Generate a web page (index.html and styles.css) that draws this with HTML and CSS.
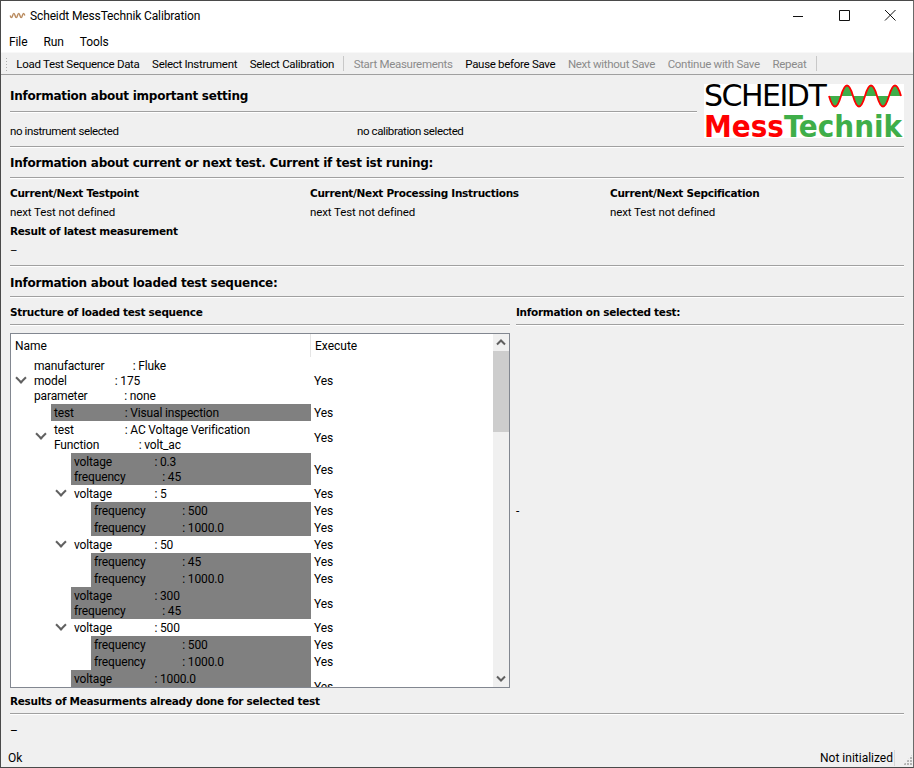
FILE: index.html
```html
<!DOCTYPE html>
<html>
<head>
    <meta charset="UTF-8">
    <title>Scheidt MessTechnik Calibration</title>
    <link rel="stylesheet" href="styles.css">
</head>
<body>
<div id="window">
    <div id="titleBar">
        <svg class="appIcon" viewBox="0 0 74 24"><path d="M1 12c4 14 8 14 12 0c4 -14 8 -14 12 0c4 14 8 14 12 0c4 -14 8 -14 12 0c4 14 8 14 12 0c4 -14 8 -14 12 0"/></svg>
        <span class="appTitle">Scheidt MessTechnik Calibration</span>
        <div class="winButtons">
            <svg viewBox="0 0 46 29"><path d="M18 15.500h10"/></svg>
            <svg viewBox="0 0 46 29"><path d="M18.500 9.500h10v10h-10z"/></svg>
            <svg viewBox="0 0 46 29"><path d="M18 9l10.500 10.500M28.500 9l-10.500 10.500"/></svg>
        </div>
    </div>
    <div id="menuBar">
        <span>File</span>
        <span>Run</span>
        <span>Tools</span>
    </div>
    <div id="toolBar">
        <div class="handle"></div>
        <span class="tool">Load Test Sequence Data</span>
        <span class="tool">Select Instrument</span>
        <span class="tool">Select Calibration</span>
        <div class="toolSep"></div>
        <span class="tool off">Start Measurements</span>
        <span class="tool">Pause before Save</span>
        <span class="tool off">Next without Save</span>
        <span class="tool off">Continue with Save</span>
        <span class="tool off">Repeat</span>
        <div class="toolSep"></div>
    </div>

    <div id="main">
        <div class="topRow">
            <div class="topLeft">
                <h2 class="first">Information about important setting</h2>
                <div class="line"></div>
                <div class="selected">
                    <span class="selInstrument">no instrument selected</span>
                    <span>no calibration selected</span>
                </div>
            </div>
            <div class="logo">
                <div class="logoTop">
                    <span>SCHEIDT</span>
                    <svg viewBox="0 0 74 24"><path d="M1 12c4 14 8 14 12 0c4 -14 8 -14 12 0c4 14 8 14 12 0c4 -14 8 -14 12 0c4 14 8 14 12 0c4 -14 8 -14 12 0"/></svg>
                </div>
                <div class="logoBottom"><span class="red">Mess</span><span class="green">Technik</span></div>
            </div>
        </div>
        <div class="line"></div>

        <h2>Information about current or next test. Current if test ist runing:</h2>
        <div class="line"></div>
        <div class="current">
            <div class="curCols">
                <div>
                    <h3>Current/Next Testpoint</h3>
                    <div class="val">next Test not defined</div>
                </div>
                <div>
                    <h3>Current/Next Processing Instructions</h3>
                    <div class="val">next Test not defined</div>
                </div>
                <div>
                    <h3>Current/Next Sepcification</h3>
                    <div class="val">next Test not defined</div>
                </div>
            </div>
            <h3>Result of latest measurement</h3>
            <div class="val">–</div>
        </div>
        <div class="line"></div>

        <h2 class="loaded">Information about loaded test sequence:</h2>
        <div class="line"></div>

        <div class="panels">
            <div class="panelLeft">
                <h3 class="panelHead">Structure of loaded test sequence</h3>
                <div class="line"></div>
                <div id="tree">
                    <div class="treeMain">
                        <div class="treeHead">
                            <div class="headName">Name</div>
                            <div class="headExec">Execute</div>
                        </div>
                        <div class="treeBody">
                            <div class="row d0">
                                <div class="arrow open"></div>
                                <div class="cell">manufacturer          : Fluke
model                 : 175
parameter             : none</div>
                                <div class="exec">Yes</div>
                            </div>
                            <div class="row d1">
                                <div class="arrow"></div>
                                <div class="cell grey">test                  : Visual inspection</div>
                                <div class="exec">Yes</div>
                            </div>
                            <div class="row d1">
                                <div class="arrow open"></div>
                                <div class="cell">test                  : AC Voltage Verification
Function              : volt_ac</div>
                                <div class="exec">Yes</div>
                            </div>
                            <div class="row d2">
                                <div class="arrow"></div>
                                <div class="cell grey">voltage               : 0.3
frequency             : 45</div>
                                <div class="exec">Yes</div>
                            </div>
                            <div class="row d2">
                                <div class="arrow open"></div>
                                <div class="cell">voltage               : 5</div>
                                <div class="exec">Yes</div>
                            </div>
                            <div class="row d3">
                                <div class="arrow"></div>
                                <div class="cell grey">frequency             : 500</div>
                                <div class="exec">Yes</div>
                            </div>
                            <div class="row d3">
                                <div class="arrow"></div>
                                <div class="cell grey">frequency             : 1000.0</div>
                                <div class="exec">Yes</div>
                            </div>
                            <div class="row d2">
                                <div class="arrow open"></div>
                                <div class="cell">voltage               : 50</div>
                                <div class="exec">Yes</div>
                            </div>
                            <div class="row d3">
                                <div class="arrow"></div>
                                <div class="cell grey">frequency             : 45</div>
                                <div class="exec">Yes</div>
                            </div>
                            <div class="row d3">
                                <div class="arrow"></div>
                                <div class="cell grey">frequency             : 1000.0</div>
                                <div class="exec">Yes</div>
                            </div>
                            <div class="row d2">
                                <div class="arrow"></div>
                                <div class="cell grey">voltage               : 300
frequency             : 45</div>
                                <div class="exec">Yes</div>
                            </div>
                            <div class="row d2">
                                <div class="arrow open"></div>
                                <div class="cell">voltage               : 500</div>
                                <div class="exec">Yes</div>
                            </div>
                            <div class="row d3">
                                <div class="arrow"></div>
                                <div class="cell grey">frequency             : 500</div>
                                <div class="exec">Yes</div>
                            </div>
                            <div class="row d3">
                                <div class="arrow"></div>
                                <div class="cell grey">frequency             : 1000.0</div>
                                <div class="exec">Yes</div>
                            </div>
                            <div class="row d2 cut">
                                <div class="arrow"></div>
                                <div class="cell grey">voltage               : 1000.0</div>
                                <div class="exec">Yes</div>
                            </div>
                        </div>
                    </div>
                    <div class="scrollBar">
                        <svg viewBox="0 0 16 17"><path d="M4 10.500l4 -4l4 4"/></svg>
                        <div class="thumbTrack"><div class="thumb"></div></div>
                        <svg viewBox="0 0 16 17"><path d="M4 6.500l4 4l4 -4"/></svg>
                    </div>
                </div>
            </div>
            <div class="panelRight">
                <h3 class="panelHead">Information on selected test:</h3>
                <div class="line"></div>
                <div class="infoBox">-</div>
            </div>
        </div>

        <h3 class="resultHead">Results of Measurments already done for selected test</h3>
        <div class="line"></div>
        <div class="resultVal">–</div>
    </div>

    <div id="statusBar">
        <span class="statusLeft">Ok</span>
        <span class="statusRight">Not initialized</span>
        <div class="grip"></div>
    </div>
</div>
</body>
</html>
```

FILE: styles.css
```css
* {
    margin: 0;
    padding: 0;
    box-sizing: border-box;
}

html, body {
    height: 100%;
    overflow: hidden;
}

body {
    font-family: "Roboto", sans-serif;
    font-size: 12px;
    color: #000;
    background-color: #f0f0f0;
}

#window {
    height: 768px;
    display: flex;
    flex-direction: column;
    border: 1px solid #4a4a4a;
    border-right-color: #6a6a6a;
}

/*标题栏*/
#titleBar {
    height: 29px;
    flex: none;
    display: flex;
    align-items: center;
    background-color: #fff;
    padding-left: 9px;
}

.appIcon {
    width: 15px;
    height: 5px;
    margin-right: 5px;
    overflow: visible;
}

.appIcon path {
    fill: none;
    stroke: #b98a5e;
    stroke-width: 7;
}

.appTitle {
    letter-spacing: -0.130px;
}

.winButtons {
    margin-left: auto;
    display: flex;
}

.winButtons svg {
    width: 46px;
    height: 29px;
    display: block;
}

.winButtons path {
    fill: none;
    stroke: #111;
    stroke-width: 1;
}

/*菜单*/
#menuBar {
    height: 22px;
    flex: none;
    display: flex;
    align-items: center;
    gap: 16px;
    padding: 1px 0 0 8px;
    letter-spacing: -0.100px;
    background-color: #fff;
}

/*工具栏*/
#toolBar {
    height: 23px;
    flex: none;
    display: flex;
    align-items: center;
    font-size: 11.500px;
    letter-spacing: -0.300px;
    background-color: #f0f0f0;
    border-top: 1px solid #f8f8f8;
    border-bottom: 1px solid #a0a0a0;
    padding: 1px 0 0 4px;
}

.handle {
    width: 3px;
    height: 15px;
    margin-right: 2px;
    background-image: radial-gradient(#b0b0b0 1px, transparent 1px);
    background-size: 3px 3px;
}

.tool {
    padding: 0 6.300px;
    white-space: nowrap;
}

.off {
    color: #8b8b8b;
}

.toolSep {
    width: 1px;
    height: 15px;
    margin: -1px 3px 0;
    background-color: #c8c8c8;
}

/*内容*/
#main {
    flex: 1;
    padding: 0 9px;
    min-height: 0;
}

h2 {
    font-family: "DejaVu Sans", sans-serif;
    font-size: 12px;
    font-weight: bold;
    letter-spacing: -0.250px;
    line-height: 20px;
    height: 29px;
    padding-top: 5px;
    white-space: nowrap;
}

h2.first {
    height: 36px;
    padding-top: 11px;
}

h2.loaded {
    padding-top: 6px;
}

h3 {
    font-family: "DejaVu Sans", sans-serif;
    font-size: 10.500px;
    font-weight: bold;
    letter-spacing: -0.300px;
    line-height: 19px;
    white-space: nowrap;
}

.line {
    height: 2px;
    flex: none;
    background-color: #fff;
    border-top: 1px solid #a0a0a0;
}

.topRow {
    display: flex;
    height: 71px;
}

.topLeft {
    width: 687px;
    flex: none;
}

.selected {
    display: flex;
    padding-top: 9px;
    font-size: 11.500px;
    letter-spacing: -0.400px;
    line-height: 18px;
}

.selInstrument {
    width: 347px;
}

/*logo*/
.logo {
    width: 200px;
    height: 54px;
    margin: 9px 0 0 7px;
    background-color: #fff;
    font-family: "DejaVu Sans", sans-serif;
}

.logoTop {
    height: 24px;
    display: flex;
    align-items: center;
    font-size: 30px;
    letter-spacing: -1.500px;
    line-height: 24px;
    color: #000;
}

.logoTop svg {
    width: 74px;
    height: 24px;
    margin-left: 3px;
    flex: none;
    overflow: visible;
}

.logoTop path {
    fill: #3fae49;
    stroke: #f00;
    stroke-width: 1.800;
}

.logoBottom {
    height: 30px;
    padding-top: 5px;
    font-family: "DejaVu Sans Condensed", "DejaVu Sans", sans-serif;
    font-size: 31px;
    font-stretch: condensed;
    font-weight: bold;
    line-height: 27px;
    white-space: nowrap;
}

.red {
    color: #f00;
}

.green {
    color: #3fae49;
}

.current {
    padding: 5px 0 5px;
}

.curCols {
    display: grid;
    grid-template-columns: 300px 300px 300px;
}

.val {
    height: 19px;
    font-size: 11.500px;
    letter-spacing: -0.100px;
    line-height: 19px;
}

.panels {
    display: flex;
    gap: 6px;
}

.panelLeft {
    width: 500px;
    flex: none;
}

.panelRight {
    flex: 1;
    display: flex;
    flex-direction: column;
}

.panelHead {
    height: 26px;
    padding-top: 5px;
    line-height: 18px;
}

.infoBox {
    flex: 1;
    display: flex;
    align-items: center;
    margin-top: 7px;
}

/*树*/
#tree {
    height: 355px;
    margin-top: 7px;
    display: flex;
    background-color: #fff;
    border: 1px solid #828790;
}

.treeMain {
    width: 482px;
    flex: none;
    overflow: hidden;
}

.treeHead {
    height: 23px;
    display: flex;
    line-height: 24px;
}

.headName {
    width: 300px;
    padding-left: 4px;
    border-right: 1px solid #e5e5e5;
}

.headExec {
    padding-left: 4px;
}

.treeBody {
    height: 330px;
    overflow: hidden;
}

.row {
    display: flex;
    line-height: 15px;
    letter-spacing: -0.150px;
}

.row.cut {
    height: 32px;
}

.row.d0 {
    padding-left: 0;
}

.row.d1 {
    padding-left: 20px;
}

.row.d2 {
    padding-left: 40px;
}

.row.d3 {
    padding-left: 60px;
}

.row.d0 .cell {
    width: 280px;
}

.row.d1 .cell {
    width: 260px;
}

.row.d2 .cell {
    width: 240px;
}

.row.d3 .cell {
    width: 220px;
}

.arrow {
    width: 20px;
    flex: none;
    display: flex;
    align-items: center;
    justify-content: center;
}

.arrow.open::before {
    content: "";
    width: 6px;
    height: 6px;
    margin: -6px 1px 0 0;
    border-right: 2px solid #606060;
    border-bottom: 2px solid #606060;
    transform: rotate(45deg);
}

.cell {
    padding: 2px 3px 0;
    white-space: pre;
    flex: none;
    overflow: hidden;
}

.grey {
    background-color: #808080;
}

.exec {
    padding: 2px 0 0 3px;
    display: flex;
    align-items: center;
}

/*滚动条*/
.scrollBar {
    width: 16px;
    flex: none;
    display: flex;
    flex-direction: column;
    background-color: #f0f0f0;
}

.scrollBar svg {
    width: 16px;
    height: 17px;
    flex: none;
    display: block;
}

.scrollBar path {
    fill: none;
    stroke: #606060;
    stroke-width: 2;
}

.thumbTrack {
    flex: 1;
}

.thumb {
    height: 81px;
    background-color: #cdcdcd;
}

.resultHead {
    height: 25px;
    padding-top: 4px;
    line-height: 18px;
}

.resultVal {
    padding-top: 7px;
    line-height: 18px;
}

/*状态栏*/
#statusBar {
    height: 20px;
    flex: none;
    display: flex;
    align-items: center;
    padding: 1px 0 0 7px;
}

.statusRight {
    margin-left: auto;
    height: 16px;
    line-height: 16px;
    padding-right: 1px;
    border-right: 1px solid #d8d8d8;
}

.grip {
    width: 18px;
    height: 12px;
    align-self: flex-end;
    margin-bottom: 1px;
    background-image: radial-gradient(circle at 1px 1px, #b4b4b4 1px, transparent 1px);
    background-size: 3px 3px;
    background-position: right bottom;
    clip-path: polygon(100% 0, 100% 100%, 40% 100%);
}
```
